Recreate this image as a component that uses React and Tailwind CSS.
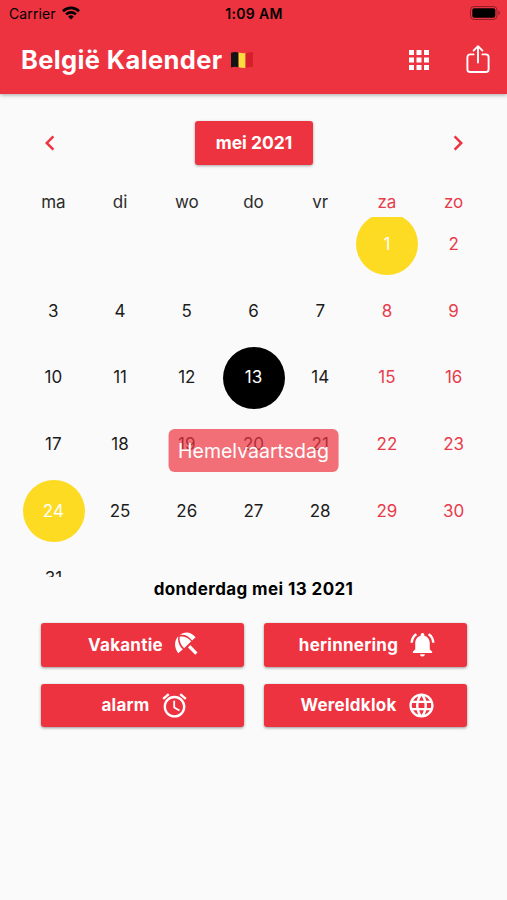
import { useState } from 'react';
import {
  MdAlarm,
  MdApps,
  MdChevronLeft,
  MdChevronRight,
  MdLanguage,
  MdNotificationsActive,
} from 'react-icons/md';

const weekdays = ['ma', 'di', 'wo', 'do', 'vr', 'za', 'zo'];
const holidays = { 1: 'Dag van de Arbeid', 13: 'Hemelvaartsdag', 24: 'Pinkstermaandag' };
const dayNames = ['maandag', 'dinsdag', 'woensdag', 'donderdag', 'vrijdag', 'zaterdag', 'zondag'];

// May 2021 starts on a Saturday
const firstOffset = 5;
const cells = [
  ...Array(firstOffset).fill(null),
  ...Array.from({ length: 31 }, (_, i) => i + 1),
];

function UmbrellaIcon({ className }) {
  return (
    <svg className={className} viewBox="0 0 24 24" fill="currentColor">
      <path d="M12.4 14.4l1.9-1.9 6 6.1-1.9 1.9z" />
      <path d="M15.8 8.6l2.9-2.6C15 1.3 9.4 .8 5.6 4.2c4-.9 7.3.8 10.2 4.4z" />
      <path d="M4.4 5.2C.8 8.9.9 14.6 4.3 19.300l3.900-3.300C4.900 13 3.700 9.300 4.400 5.200z" />
      <path d="M5.500 5.600c-.5 3.700 1 6.700 3.700 9.500l5.900-5.700C12.300 6.400 9.200 5 5.500 5.600z" />
    </svg>
  );
}

const actions = [
  { label: 'Vakantie', icon: UmbrellaIcon },
  { label: 'herinnering', icon: MdNotificationsActive },
  { label: 'alarm', icon: MdAlarm },
  { label: 'Wereldklok', icon: MdLanguage },
];

function StatusBar() {
  return (
    <div className="grid h-[27px] grid-cols-3 items-center pl-[9px] pr-[6px] text-black">
      <div className="flex items-center gap-[6px] text-[14px] tracking-[0.1px]">
        <span>Carrier</span>
        <svg className="mb-[2px] h-[14px] w-[18px]" viewBox="0 0 18 14" fill="none" stroke="currentColor" strokeWidth="2.6">
          <path d="M1 5.2a11.4 11.4 0 0 1 16 0" />
          <path d="M4.1 8.4a7 7 0 0 1 9.8 0" />
          <path d="M9 13.6 6.2 10.7a4 4 0 0 1 5.6 0z" fill="currentColor" stroke="none" />
        </svg>
      </div>
      <div className="pr-[2px] text-center text-[14px] font-semibold tracking-[0.3px]">1:09 AM</div>
      <svg className="mb-[2px] h-[14px] w-[31px] justify-self-end" viewBox="0 0 31 14">
        <rect x="0.5" y="0.5" width="26.5" height="13" rx="3.6" fill="none" stroke="#000" strokeOpacity="0.4" />
        <rect x="2.3" y="2.3" width="23" height="9.4" rx="2" fill="#000" />
        <path d="M28.5 4.8c1.8.5 1.8 3.9 0 4.4z" fill="#000" fillOpacity="0.4" />
      </svg>
    </div>
  );
}

function BelgianFlag() {
  return (
    <svg className="mb-[2px] h-[18px] w-[24px]" viewBox="0 0 24 18">
      <path d="M1 1.8C4 .6 6 .8 8.6 1.4v14.8C6 15.6 4 15.4 1 16.6z" fill="#141414" />
      <path d="M8.6 1.4c2.4.6 4.6 1 7 .7v14.8c-2.4.3-4.6-.1-7-.7z" fill="#fbdc40" />
      <path d="M15.6 2.1C18 1.9 20 1 23 1.3v14.8c-3-.3-5 .6-7.4.8z" fill="#d61f2c" />
    </svg>
  );
}

function ShareIcon() {
  return (
    <svg
      className="h-[28px] w-[24px]"
      viewBox="0 0 24 28"
      fill="none"
      stroke="currentColor"
      strokeWidth="1.9"
      strokeLinecap="round"
      strokeLinejoin="round"
    >
      <path d="M7.6 9.4H4.2A2.8 2.8 0 0 0 1.4 12.2v12A2.8 2.8 0 0 0 4.2 27h15.6a2.8 2.8 0 0 0 2.8-2.8v-12a2.8 2.8 0 0 0-2.8-2.8h-3.4" />
      <path d="M12 17.6V1.4M7.6 5.6 12 1.2l4.4 4.4" />
    </svg>
  );
}

function Header() {
  return (
    <header className="relative h-[94px] bg-[#ee3340] text-white shadow-[0_1px_4px_rgba(0,0,0,0.35)]">
      <StatusBar />
      <div className="flex h-[67px] items-center pl-[21px] pr-[17px]">
        <h1 className="text-[25.5px] font-bold tracking-[0.37px]">België Kalender</h1>
        <div className="ml-[7px]">
          <BelgianFlag />
        </div>
        <div className="ml-auto flex items-center gap-[32px]">
          <button type="button" className="pb-[2px]">
            <MdApps className="size-[30px]" />
          </button>
          <button type="button" className="pb-[3px]">
            <ShareIcon />
          </button>
        </div>
      </div>
    </header>
  );
}

function DayCell({ day, column, selected, onSelect }) {
  if (!day) return <div className="h-[66.7px]" />;

  let style = column > 4 ? 'text-[#e83c4c]' : 'text-[#1c1c1c]';
  if (holidays[day]) style = 'bg-[#fddb23] text-white';
  if (selected) style = 'bg-black text-white';

  return (
    <div className="flex h-[66.7px] items-center justify-center">
      <button
        type="button"
        onClick={() => onSelect(day)}
        className={`flex size-[62px] items-center justify-center rounded-full pr-px pt-px text-[17px] ${style}`}
      >
        {day}
      </button>
    </div>
  );
}

export default function App() {
  const [selectedDay, setSelectedDay] = useState(13);
  const holiday = holidays[selectedDay];
  const dayName = dayNames[(selectedDay + firstOffset - 1) % 7];

  return (
    <div className="h-[900px] w-[507px] overflow-hidden bg-[#fafafa] font-['Inter','Liberation_Sans',sans-serif]">
      <Header />

      <main>
        {/* Month navigation */}
        <div className="flex items-center justify-between pl-[35px] pr-[34px] pt-[27px]">
          <button type="button" className="text-[#ee3340]">
            <MdChevronLeft className="size-[30px]" />
          </button>
          <button
            type="button"
            className="h-[43.5px] w-[118px] rounded-[3px] bg-[#ee3340] text-[17.5px] font-bold text-white shadow-[0_1px_3px_rgba(0,0,0,0.35)]"
          >
            mei 2021
          </button>
          <button type="button" className="text-[#ee3340]">
            <MdChevronRight className="size-[30px]" />
          </button>
        </div>

        <div className="mt-[24.5px] grid h-[28px] grid-cols-7 items-start px-[20px] text-center text-[17px] leading-[27px]">
          {weekdays.map((name, i) => (
            <span key={name} className={i > 4 ? 'text-[#e83c4c]' : 'text-[#2b2b2b]'}>
              {name}
            </span>
          ))}
        </div>

        <div className="relative">
          <div className="h-[360px] overflow-hidden pl-[20.5px] pr-[19.5px]">
            <div className="-mt-[6px] grid grid-cols-7">
              {cells.map((day, i) => (
                <DayCell
                  key={i}
                  day={day}
                  column={i % 7}
                  selected={day === selectedDay}
                  onSelect={setSelectedDay}
                />
              ))}
            </div>
          </div>
          {holiday && (
            <div className="absolute left-1/2 top-[212px] flex h-[43px] -translate-x-1/2 items-center whitespace-nowrap rounded-[6px] bg-[#ee3340]/70 px-[10px] pt-[2px] text-[19.5px] text-white">
              {holiday}
            </div>
          )}
        </div>

        <p className="text-center text-[17px] font-bold leading-[24px] tracking-[0.4px] text-black">
          {dayName} mei {selectedDay} 2021
        </p>

        <div className="mt-[22px] grid grid-cols-2 gap-x-[20px] gap-y-[17px] pl-[41px] pr-[40px]">
          {actions.map(({ label, icon: Icon }) => (
            <button
              key={label}
              type="button"
              className="flex h-[43.5px] items-center justify-center gap-[10px] rounded-[3px] bg-[#ee3340] pl-[5px] text-[17px] font-bold tracking-[0.25px] text-white shadow-[0_1px_3px_rgba(0,0,0,0.4)]"
            >
              <span className="pt-px">{label}</span>
              <Icon className="size-[29px]" />
            </button>
          ))}
        </div>
      </main>
    </div>
  );
}
